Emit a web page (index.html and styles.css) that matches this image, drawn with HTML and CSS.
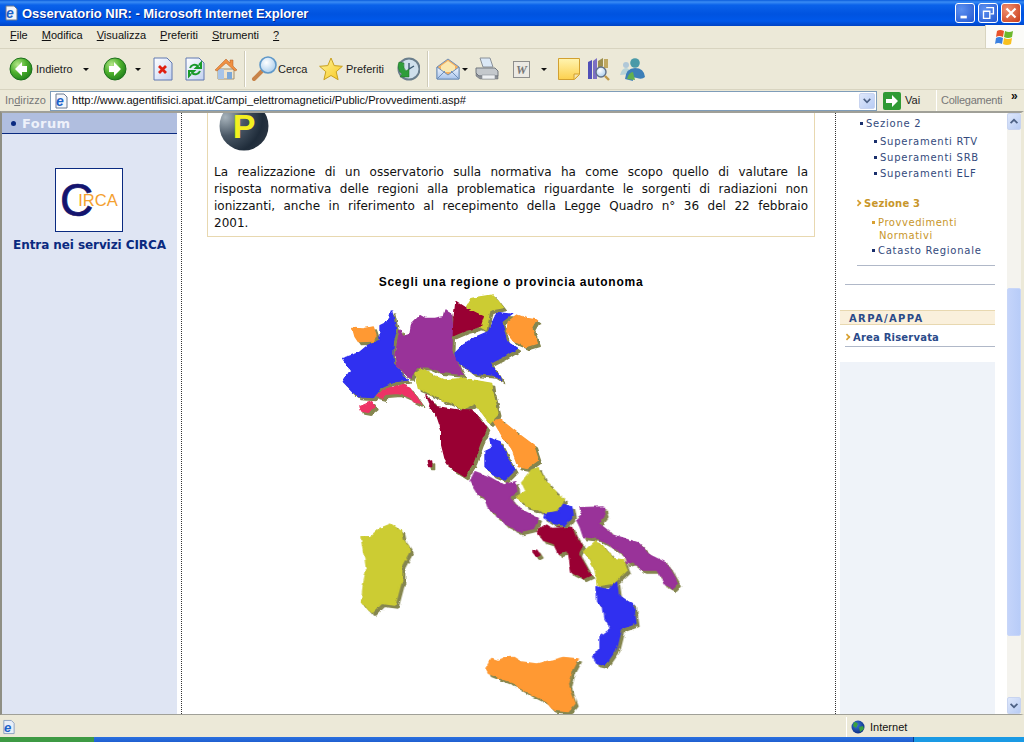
FILE: index.html
```html
<!DOCTYPE html>
<html lang="it">
<head>
<meta charset="utf-8">
<title>Osservatorio NIR</title>
<link rel="stylesheet" href="styles.css">
</head>
<body>
<svg class="defs" aria-hidden="true">
  <defs>
    <radialGradient id="gGreen" cx=".35" cy=".3" r=".8"><stop offset="0" stop-color="#b6e68a"/><stop offset=".5" stop-color="#4caf2c"/><stop offset="1" stop-color="#1a7a1a"/></radialGradient>
    <linearGradient id="gPage" x1="0" y1="0" x2="1" y2="1"><stop offset="0" stop-color="#ffffff"/><stop offset="1" stop-color="#c3d2f0"/></linearGradient>
    <linearGradient id="gNote" x1="0" y1="0" x2="0" y2="1"><stop offset="0" stop-color="#fff4b0"/><stop offset="1" stop-color="#fcd04e"/></linearGradient>
    <radialGradient id="gLens" cx=".4" cy=".35" r=".7"><stop offset="0" stop-color="#ffffff"/><stop offset="1" stop-color="#a8ccec"/></radialGradient>
    <radialGradient id="gBall" cx=".12" cy=".32" r=".95"><stop offset="0" stop-color="#a8b4bc"/><stop offset=".4" stop-color="#4a5866"/><stop offset=".8" stop-color="#1f2c3a"/><stop offset="1" stop-color="#2a3542"/></radialGradient>
    <radialGradient id="gGlobe" cx=".4" cy=".35" r=".7"><stop offset="0" stop-color="#3a78d8"/><stop offset="1" stop-color="#0a2a80"/></radialGradient>
    <linearGradient id="gStar" x1="0" y1="0" x2="1" y2="1"><stop offset="0" stop-color="#fff49a"/><stop offset="1" stop-color="#f8c820"/></linearGradient>
    <linearGradient id="gMail" x1="0" y1="0" x2="0" y2="1"><stop offset="0" stop-color="#f4f8ff"/><stop offset="1" stop-color="#a8c4ec"/></linearGradient>
    <filter id="wobble" x="-5%" y="-5%" width="110%" height="110%" color-interpolation-filters="sRGB">
      <feTurbulence type="fractalNoise" baseFrequency=".16" numOctaves="2" seed="4" result="n"/>
      <feDisplacementMap in="SourceGraphic" in2="n" scale="3.5" xChannelSelector="R" yChannelSelector="G" result="d"/>
      <feDropShadow in="d" dx="3" dy="3" stdDeviation="0" flood-color="#85864f"/>
    </filter>
  </defs>
</svg>
<div class="window">
  <header class="titlebar">
    <svg class="ie-icon" viewBox="0 0 16 16"><path d="M3 1h8l3 3v11H3z" fill="#f4f6fb" stroke="#6a7a90"/><text x="7" y="13" class="ie-e">e</text></svg>
    <span class="title-text">Osservatorio NIR: - Microsoft Internet Explorer</span>
    <div class="winbtns">
      <span class="winbtn"><svg viewBox="0 0 20 20"><rect x="5" y="13" width="7" height="3" fill="#fff"/></svg></span>
      <span class="winbtn"><svg viewBox="0 0 20 20"><path d="M8 4h8v7h-3M5 8h7v8H5z" fill="none" stroke="#fff" stroke-width="1.5"/></svg></span>
      <span class="winbtn close"><svg viewBox="0 0 20 20"><path d="M5 5l10 10M15 5L5 15" stroke="#fff" stroke-width="2.4"/></svg></span>
    </div>
  </header>

  <nav class="menubar">
    <span><u>F</u>ile</span><span><u>M</u>odifica</span><span><u>V</u>isualizza</span><span><u>P</u>referiti</span><span><u>S</u>trumenti</span><span><u>?</u></span>
    <div class="flag">
      <svg viewBox="0 0 20 18" width="20" height="18">
        <path d="M2 3q3-2 7 0l-1 6q-4-2-7 0z" fill="#e8522a"/>
        <path d="M10 3q4 2 8 0l-1 6q-4 2-8 0z" fill="#6cb82c"/>
        <path d="M1 10q3-2 7 0l-1 6q-4-2-7 0z" fill="#3a80e0"/>
        <path d="M9 10q4 2 8 0l-1 6q-4 2-8 0z" fill="#f8c020"/>
      </svg>
    </div>
  </nav>

  <div class="toolbar">
    <svg class="ico back" viewBox="0 0 24 24"><circle cx="12" cy="12" r="11" fill="url(#gGreen)" stroke="#1d701d"/><path d="M13 5l-7 7 7 7v-4h5V9h-5z" fill="#fff"/></svg>
    <span class="lbl lbl-back">Indietro</span><i class="caret c-back"></i>
    <svg class="ico fwd" viewBox="0 0 24 24"><circle cx="12" cy="12" r="11" fill="url(#gGreen)" stroke="#1d701d"/><path d="M11 5l7 7-7 7v-4H6V9h5z" fill="#fff"/></svg>
    <i class="caret c-fwd"></i>
    <svg class="ico stop" viewBox="0 0 20 24"><path d="M1 1h13l5 5v17H1z" fill="url(#gPage)" stroke="#6078b0"/><path d="M6 9l7 7M13 9l-7 7" stroke="#e02010" stroke-width="2.8"/></svg>
    <svg class="ico refresh" viewBox="0 0 20 24"><path d="M1 1h13l5 5v17H1z" fill="url(#gPage)" stroke="#6078b0"/><path d="M5 11a5 5 0 0 1 8-2l-2 2h5V6l-2 2M15 14a5 5 0 0 1-8 2l2-2H4v5l2-2" fill="none" stroke="#1a9a2a" stroke-width="2"/></svg>
    <svg class="ico home" viewBox="0 0 24 24"><path d="M4 12v10h16V12z" fill="#f0e4cc" stroke="#a09070"/><path d="M4 12v10h6V12z" fill="#a8c4e8"/><path d="M13 15h5v7h-5z" fill="#7ca8d8"/><path d="M1 13L12 2l4 4V3h3v6l4 4-2 1-9-8-9 8z" fill="#f09040" stroke="#b05a20" stroke-width=".5"/></svg>
    <i class="sep s1"></i>
    <svg class="ico search" viewBox="0 0 26 26"><path d="M11 15l-8 8" stroke="#c8844a" stroke-width="4" stroke-linecap="round"/><circle cx="17" cy="9" r="8" fill="url(#gLens)" stroke="#5f98c8" stroke-width="1.6"/></svg>
    <span class="lbl lbl-cerca">Cerca</span>
    <svg class="ico star" viewBox="0 0 24 24"><path d="M12 1l3.2 7.6 8.2.7-6.2 5.4 1.9 8L12 18.5l-7.1 4.2 1.9-8L.6 9.3l8.2-.7z" fill="url(#gStar)" stroke="#c8a020"/></svg>
    <span class="lbl lbl-pref">Preferiti</span>
    <svg class="ico hist" viewBox="0 0 24 24"><circle cx="13" cy="12" r="10.5" fill="#cfe0ec" stroke="#6a7e8c" stroke-width="2"/><path d="M13 6v6l5-3" stroke="#3a5870" stroke-width="1.4" fill="none"/><path d="M3 5a10 10 0 0 0 3 12l-2 3h9v-8l-3 2q-3-3-2-8z" fill="#2f9e3a" stroke="#1b6a22" stroke-width=".5"/></svg>
    <i class="sep s2"></i>
    <svg class="ico mail" viewBox="0 0 24 24"><path d="M1 10L12 2l11 8v12H1z" fill="#f4b060" stroke="#7090b8"/><path d="M5 9l7-5 7 5v6H5z" fill="#fbe8b0"/><path d="M1 10l11 8 11-8v12H1z" fill="url(#gMail)" stroke="#7090b8"/><path d="M1 22l8-8M23 22l-8-8" stroke="#7090b8"/></svg>
    <i class="caret c-mail"></i>
    <svg class="ico print" viewBox="0 0 24 24"><path d="M5 1h10l3 9H8z" fill="#dbe8f6" stroke="#8a9098"/><path d="M1 11h19l3 3v5H4l-3-3z" fill="#c4c8cc" stroke="#70767e"/><path d="M1 16l3 3h19v3H5l-4-3z" fill="#8e9298" stroke="#60666e" stroke-width=".5"/><path d="M7 18h13v4H7z" fill="#eef0f2" stroke="#8a9098" stroke-width=".6"/></svg>
    <svg class="ico word" viewBox="0 0 18 18"><rect x=".5" y=".5" width="17" height="17" fill="#eceae4" stroke="#8a8a88"/><text x="9" y="14" class="w-glyph">W</text></svg>
    <i class="caret c-word"></i>
    <svg class="ico note" viewBox="0 0 22 22"><path d="M.5.5h21v16l-5 5H.5z" fill="url(#gNote)" stroke="#d2a030"/><path d="M16 21v-5h5" fill="#f4e4b0" stroke="#d2a030"/></svg>
    <svg class="ico research" viewBox="0 0 24 24"><path d="M1 5l4-2v19H1z" fill="#5050b8"/><path d="M6 4l4-3v21H6z" fill="#7c70c4"/><path d="M11 4l5-3v8l-5 6z" fill="#9c8f50"/><path d="M17 2h4v9h-4z" fill="#c0a860"/><circle cx="14" cy="15" r="5" fill="url(#gLens)" stroke="#607088" stroke-width="1.4"/><path d="M18 19l4 4" stroke="#c09848" stroke-width="2.4"/></svg>
    <svg class="ico msgr" viewBox="0 0 26 24"><circle cx="6" cy="8" r="3" fill="#b0c8d8"/><path d="M0 18q2-7 6-7t5 6z" fill="#b8d4d8"/><circle cx="15" cy="6" r="4.8" fill="#4a9aa8"/><path d="M5 22q1-11 10-11t10 9q-3 3-8 1t-4 3z" fill="#3c7fb8"/><path d="M7 22q2-7 6-7l2 8z" fill="#62b050"/></svg>
  </div>

  <div class="addressbar">
    <span class="addr-label">In<u>d</u>irizzo</span>
    <div class="addr-input">
      <svg class="addr-ico" viewBox="0 0 16 16"><path d="M3 1h8l3 3v11H3z" fill="#f4f6fb" stroke="#6a7a90"/><text x="7" y="13" class="ie-e">e</text></svg>
      <span class="url">http://www.agentifisici.apat.it/Campi_elettromagnetici/Public/Provvedimenti.asp#</span>
      <span class="combo"><svg viewBox="0 0 16 17"><path d="M4 6l4 4 4-4" fill="none" stroke="#4d6185" stroke-width="2"/></svg></span>
    </div>
    <svg class="go" viewBox="0 0 18 18"><rect width="18" height="18" rx="2" fill="#2f9a35"/><path d="M9 3l6 6-6 6v-4H3V7h6z" fill="#fff"/></svg>
    <span class="vai">Vai</span>
    <span class="links">Collegamenti</span>
    <span class="chev">»</span>
  </div>

  <main class="page">
    <aside class="left">
      <div class="forum"><i class="dot"></i>Forum</div>
      <div class="circa-logo"><span class="circa-c">C</span><span class="circa-r">IRCA</span></div>
      <div class="circa-link">Entra nei servizi CIRCA</div>
    </aside>
    <div class="gutter"></div>

    <section class="center">
      <div class="box">
        <svg class="ball" viewBox="0 12 50 38" width="50" height="38"><circle cx="25" cy="25" r="24.5" fill="url(#gBall)"/><text x="25" y="37" class="ball-p">P</text></svg>
        <p class="intro">
          <span class="ln">La realizzazione di un osservatorio sulla normativa ha come scopo quello di valutare la</span>
          <span class="ln">risposta normativa delle regioni alla problematica riguardante le sorgenti di radiazioni non</span>
          <span class="ln">ionizzanti, anche in riferimento al recepimento della Legge Quadro n° 36 del 22 febbraio</span>
          <span class="ln last">2001.</span>
        </p>
      </div>
      <h2 class="map-title">Scegli una regione o provincia autonoma</h2>
      <svg class="map" viewBox="330 290 360 430" width="360" height="430">
        <g filter="url(#wobble)">
          <g transform="translate(330 285) scale(.3333)">
            <polygon class="or" points="68,130 100,132 130,126 138,150 130,168 85,170 75,155"/>
            <polygon class="bl" points="185,78 195,125 200,130 190,170 188,205 190,235 232,285 195,290 150,310 130,338 85,335 40,290 62,255 38,220 85,205 115,180 150,165 150,122 175,110"/>
            <polygon class="pu" points="345,75 365,90 368,130 365,200 400,268 330,262 290,245 260,248 240,280 200,240 195,210 210,135 218,155 240,148 245,118 270,92 285,100 315,100 340,95"/>
            <polygon class="ye" points="410,65 425,40 490,30 520,68 480,75 468,135 450,125 460,95"/>
            <polygon class="cr" points="378,50 410,70 460,95 450,125 410,135 370,152 372,100"/>
            <polygon class="bl" points="500,82 545,88 515,110 530,170 560,190 520,215 480,235 518,288 490,270 430,265 380,225 375,205 400,180 440,155 475,140 495,95"/>
            <polygon class="or" points="560,90 590,100 620,105 605,130 622,175 590,185 555,170 530,140 535,110"/>
            <polygon class="pk" points="215,300 240,310 275,358 240,340 205,325 165,328 160,340 140,335 160,315"/>
            <polygon class="pk" points="90,365 125,350 135,365 115,382 95,378"/>
            <polygon class="ye" points="255,265 275,250 310,270 345,285 400,280 485,295 490,330 505,390 480,415 465,395 435,355 400,370 340,345 290,320 265,310"/>
            <polygon class="cr" points="288,332 320,365 380,375 425,375 470,430 450,475 430,530 405,575 365,550 345,520 335,480 335,435 320,390 295,355"/>
            <polygon class="cr" points="292,530 305,528 305,545 296,545"/>
            <polygon class="or" points="490,408 510,403 550,435 610,480 625,525 590,550 565,545 545,490 515,450"/>
            <polygon class="bl" points="480,460 510,470 530,510 555,555 525,585 490,570 465,545 465,500 485,490"/>
          </g>
          <g transform="translate(350 495) scale(.3333)">
            <polygon class="pu" points="375,-70 415,-55 460,-30 497,-40 500,-10 478,8 510,42 565,70 550,100 510,110 470,90 440,60 415,40 405,10 385,0 360,-40"/>
            <polygon class="ye" points="565,-82 585,-40 640,15 632,40 590,55 530,32 500,5 528,-12 515,-40 545,-75"/>
            <polygon class="bl" points="640,28 665,35 670,60 645,90 610,85 582,68 585,55 625,50"/>
            <polygon class="cr" points="590,90 605,100 665,97 680,135 698,150 685,175 722,240 700,250 665,232 655,170 625,175 610,145 580,135 562,110"/>
            <polygon class="cr" points="548,170 560,165 570,180 560,185"/>
            <polygon class="pu" points="690,38 760,36 765,60 745,85 790,120 870,145 900,180 950,205 985,265 970,280 950,270 920,225 880,225 850,200 830,205 820,175 780,150 745,130 700,125 690,95 680,75 698,60"/>
            <polygon class="ye" points="735,140 755,150 790,190 820,195 832,225 790,265 745,272 735,225 720,190 700,170"/>
            <polygon class="bl" points="800,262 805,300 850,330 858,385 815,400 800,460 765,510 740,505 728,485 750,460 750,425 785,400 765,370 760,335 740,320 738,275 775,285"/>
            <polygon class="or" points="425,490 445,497 465,488 490,487 510,500 560,507 610,495 640,487 685,492 665,530 655,570 675,625 655,650 610,645 590,620 530,590 480,560 440,545 415,535 408,520"/>
            <polygon class="ye" points="122,87 155,110 160,135 180,165 155,210 155,255 135,330 95,325 65,355 35,320 40,270 50,225 45,190 33,125 60,125 90,100"/>
          </g>
        </g>
      </svg>
    </section>

    <aside class="right">
      <div class="sec sq s2h">Sezione 2</div>
      <div class="sub sq">Superamenti RTV</div>
      <div class="sub sq">Superamenti SRB</div>
      <div class="sub sq">Superamenti ELF</div>
      <div class="sec3 arrow">Sezione 3</div>
      <div class="sub3 sq active">Provvedimenti<br>Normativi</div>
      <div class="sub3 sq cat">Catasto Regionale</div>
      <hr class="rule r1">
      <hr class="rule r2">
      <div class="arpa">ARPA/APPA</div>
      <div class="riservata arrow">Area Riservata</div>
      <hr class="rule r3">
      <div class="panel"></div>
    </aside>

    <div class="scrollbar">
      <span class="sbtn up"><svg viewBox="0 0 14 16"><path d="M3 10l4-4 4 4" fill="none" stroke="#4d6185" stroke-width="2"/></svg></span>
      <div class="track"><div class="thumb"></div></div>
      <span class="sbtn"><svg viewBox="0 0 14 16"><path d="M3 6l4 4 4-4" fill="none" stroke="#4d6185" stroke-width="2"/></svg></span>
    </div>
  </main>

  <footer class="statusbar">
    <svg class="st-ie" viewBox="0 0 16 16"><path d="M3 1h8l3 3v11H3z" fill="#e8eef8" stroke="#8aa0c0"/><text x="7" y="13" class="ie-e">e</text></svg>
    <div class="st-zone">
      <svg class="globe" viewBox="0 0 14 14"><circle cx="7" cy="7" r="6.5" fill="url(#gGlobe)"/><path d="M3 2q3 0 4 2L5 8 2 6zM8 7l4-1 1 3-4 3z" fill="#3aa040"/></svg>
      <span>Internet</span>
    </div>
  </footer>
  <div class="taskbar"><i class="start"></i><i class="tray"></i></div>
</div>
</body>
</html>
```
FILE: styles.css
```css
* { box-sizing: border-box; }
html, body { margin: 0; height: 100%; overflow: hidden; }
body { font-family: "Liberation Sans", Arial, sans-serif; background: #ece9d8; }
.defs { position: absolute; width: 0; height: 0; }
.window { width: 1024px; height: 742px; display: flex; flex-direction: column; overflow: hidden; }

/* Title bar */
.titlebar { height: 26px; flex: none; display: flex; align-items: center; padding: 0 3px 0 3px;
  background: linear-gradient(#0a5cdc 0, #3a8cf4 2px, #0a62ea 5px, #0053e0 14px, #0058ea 21px, #0043c4 26px); }
.ie-icon { width: 16px; height: 16px; flex: none; }
.ie-e { font: italic bold 14px "Liberation Sans", sans-serif; fill: #1c62c8; text-anchor: middle; }
.title-text { margin-left: 3px; color: #fff; font: bold 13px "Liberation Sans", sans-serif; letter-spacing: -.04px; text-shadow: 1px 1px 0 #0a2a90; }
.winbtns { margin-left: auto; display: flex; gap: 3px; }
.winbtn { width: 20px; height: 20px; border: 1px solid #fff; border-radius: 3px; background: radial-gradient(circle at 30% 30%, #5c90f0, #2458d0); display: block; }
.winbtn svg { display: block; width: 18px; height: 18px; }
.winbtn.close { background: radial-gradient(circle at 30% 30%, #f09070, #c83a18); }

/* Menu bar */
.menubar { height: 23px; flex: none; display: flex; align-items: center; gap: 14px; padding: 0 0 3px 10px;
  border-bottom: 1px solid #d8d4c0; font: 11px/1 "Liberation Sans", sans-serif; color: #111; }
.flag { margin: -1px 0 -3px auto; width: 39px; height: 23px; background: #fbfbf8; border-left: 1px solid #d8d4c0; display: flex; align-items: center; justify-content: center; }

/* Toolbar */
.toolbar { height: 41px; flex: none; display: flex; align-items: center; border-bottom: 1px solid #d8d4c0;
  font: 11px/1 "Liberation Sans", sans-serif; color: #222; padding: 0 0 0 9px; }
.ico { flex: none; display: block; }
.back { width: 24px; height: 24px; }
.lbl-back { margin-left: 3px; width: 45px; }
.caret { flex: none; width: 0; height: 0; border: 3px solid transparent; border-top: 3px solid #111; border-bottom: 0; }
.c-back { margin-left: 2px; }
.fwd { width: 24px; height: 24px; margin-left: 14px; }
.c-fwd { margin-left: 8px; }
.stop { width: 20px; height: 24px; margin-left: 12px; }
.refresh { width: 20px; height: 24px; margin-left: 12px; }
.home { width: 24px; height: 24px; margin-left: 9px; }
.sep { flex: none; width: 1px; height: 36px; background: #cfcbb8; border-right: 1px solid #fff; box-sizing: content-box; }
.s1 { margin-left: 6px; }
.search { width: 26px; height: 26px; margin-left: 5px; }
.lbl-cerca { margin-left: 1px; width: 41px; }
.star { width: 24px; height: 24px; }
.lbl-pref { margin-left: 3px; width: 50px; }
.hist { width: 24px; height: 24px; }
.s2 { margin-left: 7px; }
.mail { width: 24px; height: 24px; margin-left: 7px; }
.c-mail { margin-left: 2px; }
.print { width: 24px; height: 24px; margin-left: 7px; }
.word { width: 17px; height: 17px; margin-left: 14px; }
.w-glyph { font: italic bold 13px "Liberation Serif", serif; fill: #777; text-anchor: middle; }
.c-word { margin-left: 11px; }
.note { width: 22px; height: 22px; margin-left: 11px; }
.research { width: 24px; height: 24px; margin-left: 7px; }
.msgr { width: 26px; height: 24px; margin-left: 9px; }

/* Address bar */
.addressbar { height: 21px; flex: none; display: flex; align-items: center; font: 11px/1 "Liberation Sans", sans-serif; padding-left: 5px; }
.addr-label { color: #777; width: 45px; }
.addr-input { width: 827px; height: 20px; border: 1px solid #7f9db9; background: #fff; display: flex; align-items: center; padding-left: 2px; }
.addr-ico { width: 16px; height: 16px; flex: none; }
.url { margin-left: 3px; font: 11.13px/1 "Liberation Sans", sans-serif; color: #111; white-space: nowrap; }
.combo { margin-left: auto; width: 16px; height: 16px; background: linear-gradient(135deg, #dfe8fb, #b8ccf4); border: 1px solid #c8d4f0; border-radius: 2px; margin-right: 1px; }
.combo svg { display: block; width: 14px; height: 14px; }
.go { width: 18px; height: 18px; margin-left: 6px; flex: none; }
.vai { margin-left: 4px; width: 31px; color: #222; }
.links { border-left: 1px solid #fff; padding-left: 4px; height: 21px; line-height: 21px; color: #777; width: 73px; flex: none; white-space: nowrap; letter-spacing: -.25px; }
.chev { margin-left: 2px; font-weight: bold; font-size: 12px; color: #111; align-self: flex-start; }

/* Page */
.page { flex: none; height: 604px; display: flex; background: #fff; border-top: 2px solid #a0a098; border-left: 2px solid #8f8f84; border-right: 3px solid #ece9d8; border-bottom: 1px solid #a0a098; overflow: hidden; }
.left { width: 175px; flex: none; background: #dfe5f3; display: flex; flex-direction: column; align-items: center; }
.forum { width: 100%; height: 21px; background: #b0bedf; border-bottom: 1px solid #0a2a80; display: flex; align-items: center; padding-left: 9px;
  font: bold 13px "DejaVu Sans", sans-serif; color: #eef1fa; letter-spacing: .4px; }
.dot { width: 5px; height: 5px; border-radius: 50%; background: #0a2a80; margin-right: 6px; }
.circa-logo { margin-top: 34px; align-self: flex-start; margin-left: 53px; width: 68px; height: 64px; background: #fff; border: 1px solid #0a2a80; display: flex; align-items: center; padding-left: 4px; }
.circa-c { font: 46px/1 "Liberation Sans", sans-serif; color: #14146e; -webkit-text-stroke: .7px #14146e; }
.circa-r { font: 16.5px/1 "Liberation Sans", sans-serif; color: #f4a030; margin-left: -15px; margin-top: 1px; }
.circa-link { margin-top: 6px; font: bold 12px/15px "DejaVu Sans", sans-serif; color: #0a2a80; letter-spacing: -.08px; white-space: nowrap; }
.gutter { width: 5px; flex: none; border-right: 1px dotted #333; }
.center { width: 654px; flex: none; border-right: 1px dotted #333; overflow: hidden; }
.box { margin: 0 20px 0 25px; border: 1px solid #e8d8b0; border-top: 0; padding: 0 6px 4px 6px; }
.ball { display: block; margin-left: 5px; }
.ball-p { font: bold 34px "Liberation Sans", sans-serif; fill: #f4f020; text-anchor: middle; }
.intro { margin: 13px 0 0; font: 12px/17px "DejaVu Sans", sans-serif; color: #111; }
.ln { display: block; text-align: justify; text-align-last: justify; white-space: normal; }
.ln.last { text-align-last: left; }
.map-title { margin: 37px 0 0; padding-left: 5px; text-align: center; font: bold 12px/16px "Liberation Sans", sans-serif; letter-spacing: .77px; color: #000; }
.map { display: block; margin: 0 0 0 148px; }
.regions polygon, .map polygon { stroke-width: 4; stroke-linejoin: round; }
.or { fill: #ff9933; stroke: #ff9933; }
.bl { fill: #3030f0; stroke: #3030f0; }
.pu { fill: #993399; stroke: #993399; }
.ye { fill: #cccc33; stroke: #cccc33; }
.cr { fill: #990033; stroke: #990033; }
.pk { fill: #ee3366; stroke: #ee3366; }

/* Right sidebar */
.right { width: 170px; flex: none; display: flex; flex-direction: column; font: 10px/16px "DejaVu Sans", sans-serif; color: #334a7c; letter-spacing: .75px; }
.sq::before { content: ""; display: inline-block; width: 3px; height: 3px; background: #1a2f6c; vertical-align: 2px; margin-right: 3px; }
.sec { margin: 3px 0 0 24px; }
.sub { margin-left: 38px; }
.s2h + .sub { margin-top: 2px; }
.arrow::before { content: ""; display: inline-block; width: 4px; height: 4px; border-top: 2px solid #d8a030; border-right: 2px solid #d8a030; transform: rotate(45deg) scale(.8); vertical-align: 1px; margin-right: 3px; }
.sec3 { margin: 14px 0 0 19px; font-weight: bold; color: #c8962a; letter-spacing: .2px; }
.sub3 { margin-left: 36px; padding-left: 7px; text-indent: -7px; }
.active { margin-top: 4px; line-height: 13px; color: #c8962a; letter-spacing: .55px; }
.active::before { background: #d8a030; }
.cat { margin-top: 1px; }
.rule { border: 0; height: 1px; background: #b0b8c8; margin: 0; flex: none; }
.r1 { margin: 6px 11px 0 21px; }
.r2 { margin: 18px 11px 0 9px; }
.arpa { margin: 25px 11px 0 4px; height: 15px; background: #faf0dc; border-top: 1px solid #e8d8b0; border-bottom: 1px solid #e8d8b0; padding-left: 9px; font-weight: bold; line-height: 15px; color: #2a4a8a; letter-spacing: 1.35px; }
.riservata { margin: 5px 0 0 8px; font-weight: bold; color: #2a4a8a; line-height: 15px; letter-spacing: .2px; }
.r3 { margin: 1px 11px 0 9px; }
.panel { flex: 1; margin: 15px 11px 0 4px; background: #eff3f9; }

/* Scrollbar */
.scrollbar { width: 14px; flex: none; display: flex; flex-direction: column; background: #f4f3ee; margin-left: 1px; }
.sbtn { height: 17px; flex: none; display: block; background: linear-gradient(135deg, #dfe8fb, #b8ccf4); border: 1px solid #c8d4f0; border-radius: 2px; }
.sbtn svg { display: block; width: 12px; height: 15px; }
.track { flex: 1; padding-top: 158px; padding-bottom: 61px; }
.thumb { height: 100%; background: linear-gradient(90deg, #c4d4fa, #b8ccf8); border: 1px solid #c8d6f8; border-radius: 2px; }

/* Status bar */
.statusbar { height: 22px; flex: none; display: flex; align-items: center; padding: 2px 0 0 1px; font: 11px/1 "Liberation Sans", sans-serif; color: #111; }
.st-ie { width: 15px; height: 16px; }
.st-zone { margin-left: auto; width: 178px; height: 100%; border-left: 1px solid #fff; display: flex; align-items: center; padding-left: 4px; gap: 5px; }
.globe { width: 14px; height: 14px; }
.taskbar { flex: 1; display: flex; background: linear-gradient(#2a70e0, #1f5fd0); }
.start { width: 94px; background: #3e9a44; }
.tray { margin-left: 819px; flex: 1; background: #1a9ae4; border-left: 1px solid #0a3a8a; }
```
